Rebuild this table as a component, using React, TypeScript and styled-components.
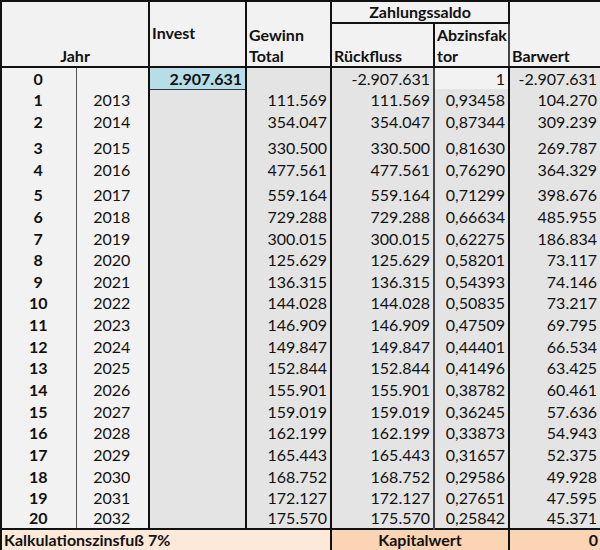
import React from 'react';
import styled, { createGlobalStyle } from 'styled-components';

const GlobalStyle = createGlobalStyle`
  html, body {
    margin: 0;
    padding: 0;
    background: #ffffff;
  }
  body {
    font-family: Lato, "Open Sans", "Liberation Sans", sans-serif;
    color: #111;
  }
`;

const LIGHT = '#f2f2f2';
const GRAY = '#e4e4e4';
const BLUE = '#b7dde8';
const PEACH_LIGHT = '#fde9d9';
const PEACH = '#fbd4b4';

type RowData = [number, string, string, string, string, string, string];

const rows: RowData[] = [
  [0, '', '2.907.631', '', '-2.907.631', '1', '-2.907.631'],
  [1, '2013', '', '111.569', '111.569', '0,93458', '104.270'],
  [2, '2014', '', '354.047', '354.047', '0,87344', '309.239'],
  [3, '2015', '', '330.500', '330.500', '0,81630', '269.787'],
  [4, '2016', '', '477.561', '477.561', '0,76290', '364.329'],
  [5, '2017', '', '559.164', '559.164', '0,71299', '398.676'],
  [6, '2018', '', '729.288', '729.288', '0,66634', '485.955'],
  [7, '2019', '', '300.015', '300.015', '0,62275', '186.834'],
  [8, '2020', '', '125.629', '125.629', '0,58201', '73.117'],
  [9, '2021', '', '136.315', '136.315', '0,54393', '74.146'],
  [10, '2022', '', '144.028', '144.028', '0,50835', '73.217'],
  [11, '2023', '', '146.909', '146.909', '0,47509', '69.795'],
  [12, '2024', '', '149.847', '149.847', '0,44401', '66.534'],
  [13, '2025', '', '152.844', '152.844', '0,41496', '63.425'],
  [14, '2026', '', '155.901', '155.901', '0,38782', '60.461'],
  [15, '2027', '', '159.019', '159.019', '0,36245', '57.636'],
  [16, '2028', '', '162.199', '162.199', '0,33873', '54.943'],
  [17, '2029', '', '165.443', '165.443', '0,31657', '52.375'],
  [18, '2030', '', '168.752', '168.752', '0,29586', '49.928'],
  [19, '2031', '', '172.127', '172.127', '0,27651', '47.595'],
  [20, '2032', '', '175.570', '175.570', '0,25842', '45.371'],
];

// excel rows are not all the same height
const rowHeights = [22, 21, 22, 26, 22, 25, 22, 22, 21, 22, 21, 22, 22, 21, 22, 22, 21, 22, 22, 21, 21];

const colWidths = [75, 73, 97, 85, 103, 75, 92];

const App: React.FC = () => {
  return (
    <>
      <GlobalStyle />
      <Sheet>
        <colgroup>
          {colWidths.map((w, i) => (
            <col key={i} style={{ width: w }} />
          ))}
        </colgroup>
        <thead>
          <HeadRow $h={20}>
            <HeadCell colSpan={2} rowSpan={2} $align="center">Jahr</HeadCell>
            <HeadCell rowSpan={2} $top>Invest</HeadCell>
            <HeadCell rowSpan={2}>
              Gewinn
              <br />
              Total
            </HeadCell>
            <GroupCell colSpan={2}>Zahlungssaldo</GroupCell>
            <HeadCell rowSpan={2}>Barwert</HeadCell>
          </HeadRow>
          <HeadRow $h={42}>
            <HeadCell>Rückfluss</HeadCell>
            <HeadCell $thinRight>
              Abzinsfak
              <br />
              tor
            </HeadCell>
          </HeadRow>
        </thead>
        <tbody>
          {rows.map((r, i) => (
            <DataRow key={r[0]} $h={rowHeights[i]}>
              <NumCell>{r[0]}</NumCell>
              <YearCell>{r[1]}</YearCell>
              {i === 0 ? (
                <InvestCell>{r[2]}</InvestCell>
              ) : (
                <ValueCell $bg={GRAY} $right="2px solid #111">{r[2]}</ValueCell>
              )}
              <ValueCell $bg={GRAY} $right="2px solid #111">{r[3]}</ValueCell>
              <ValueCell $bg={GRAY} $right="2px solid #444">{r[4]}</ValueCell>
              <ValueCell $bg={i === 0 ? LIGHT : GRAY} $right="2px solid #111">{r[5]}</ValueCell>
              <ValueCell $bg={GRAY} $right="2px solid #111">{r[6]}</ValueCell>
            </DataRow>
          ))}
        </tbody>
        <tfoot>
          <FootRow>
            <FootCell colSpan={4} $bg={PEACH_LIGHT}>Kalkulationszinsfuß 7%</FootCell>
            <FootCell colSpan={2} $bg={PEACH} $align="center">Kapitalwert</FootCell>
            <FootCell $bg={PEACH} $align="right">0</FootCell>
          </FootRow>
        </tfoot>
      </Sheet>
    </>
  );
};

export default App;

const Sheet = styled.table`
  width: 600px;
  table-layout: fixed;
  border-collapse: collapse;
  border: 2px solid #111;
  font-size: 16px;
`;

const HeadRow = styled.tr<{ $h: number }>`
  height: ${(p) => p.$h}px;
`;

const HeadCell = styled.th<{ $align?: string; $top?: boolean; $thinRight?: boolean }>`
  background: ${LIGHT};
  font-weight: 700;
  text-align: ${(p) => p.$align || 'left'};
  vertical-align: ${(p) => (p.$top ? 'top' : 'bottom')};
  padding: ${(p) => (p.$top ? '20px 2px 0' : '0 2px')};
  line-height: 21px;
  border-right: ${(p) => (p.$thinRight ? '2px solid #444' : '2px solid #111')};
  border-bottom: 2px solid #111;
  white-space: nowrap;
  overflow: hidden;
`;

const GroupCell = styled.th`
  background: ${LIGHT};
  font-weight: 700;
  text-align: center;
  vertical-align: bottom;
  line-height: 20px;
  padding: 0;
  border-right: 2px solid #111;
  border-bottom: 2px solid #111;
`;

const DataRow = styled.tr<{ $h: number }>`
  height: ${(p) => p.$h}px;
`;

const BaseCell = styled.td`
  padding: 0 3px 0 2px;
  line-height: 20px;
  vertical-align: bottom;
  white-space: nowrap;
  overflow: hidden;
`;

const NumCell = styled(BaseCell)`
  background: ${LIGHT};
  font-weight: 700;
  text-align: center;
  border-right: 1px solid #555;
`;

const YearCell = styled(BaseCell)`
  background: ${LIGHT};
  text-align: center;
  border-right: 2px solid #111;
`;

const ValueCell = styled(BaseCell)<{ $bg: string; $right: string }>`
  background: ${(p) => p.$bg};
  text-align: right;
  border-right: ${(p) => p.$right};
`;

const InvestCell = styled(BaseCell)`
  background: ${BLUE};
  font-weight: 700;
  text-align: right;
  border-right: 2px solid #111;
  border-bottom: 1px solid #333;
`;

const FootRow = styled.tr`
  height: 20px;
`;

const FootCell = styled.td<{ $bg: string; $align?: string }>`
  background: ${(p) => p.$bg};
  font-weight: 700;
  text-align: ${(p) => p.$align || 'left'};
  line-height: 20px;
  padding: 0 2px;
  vertical-align: bottom;
  border-top: 2px solid #111;
  border-right: 2px solid #111;
  white-space: nowrap;
`;
